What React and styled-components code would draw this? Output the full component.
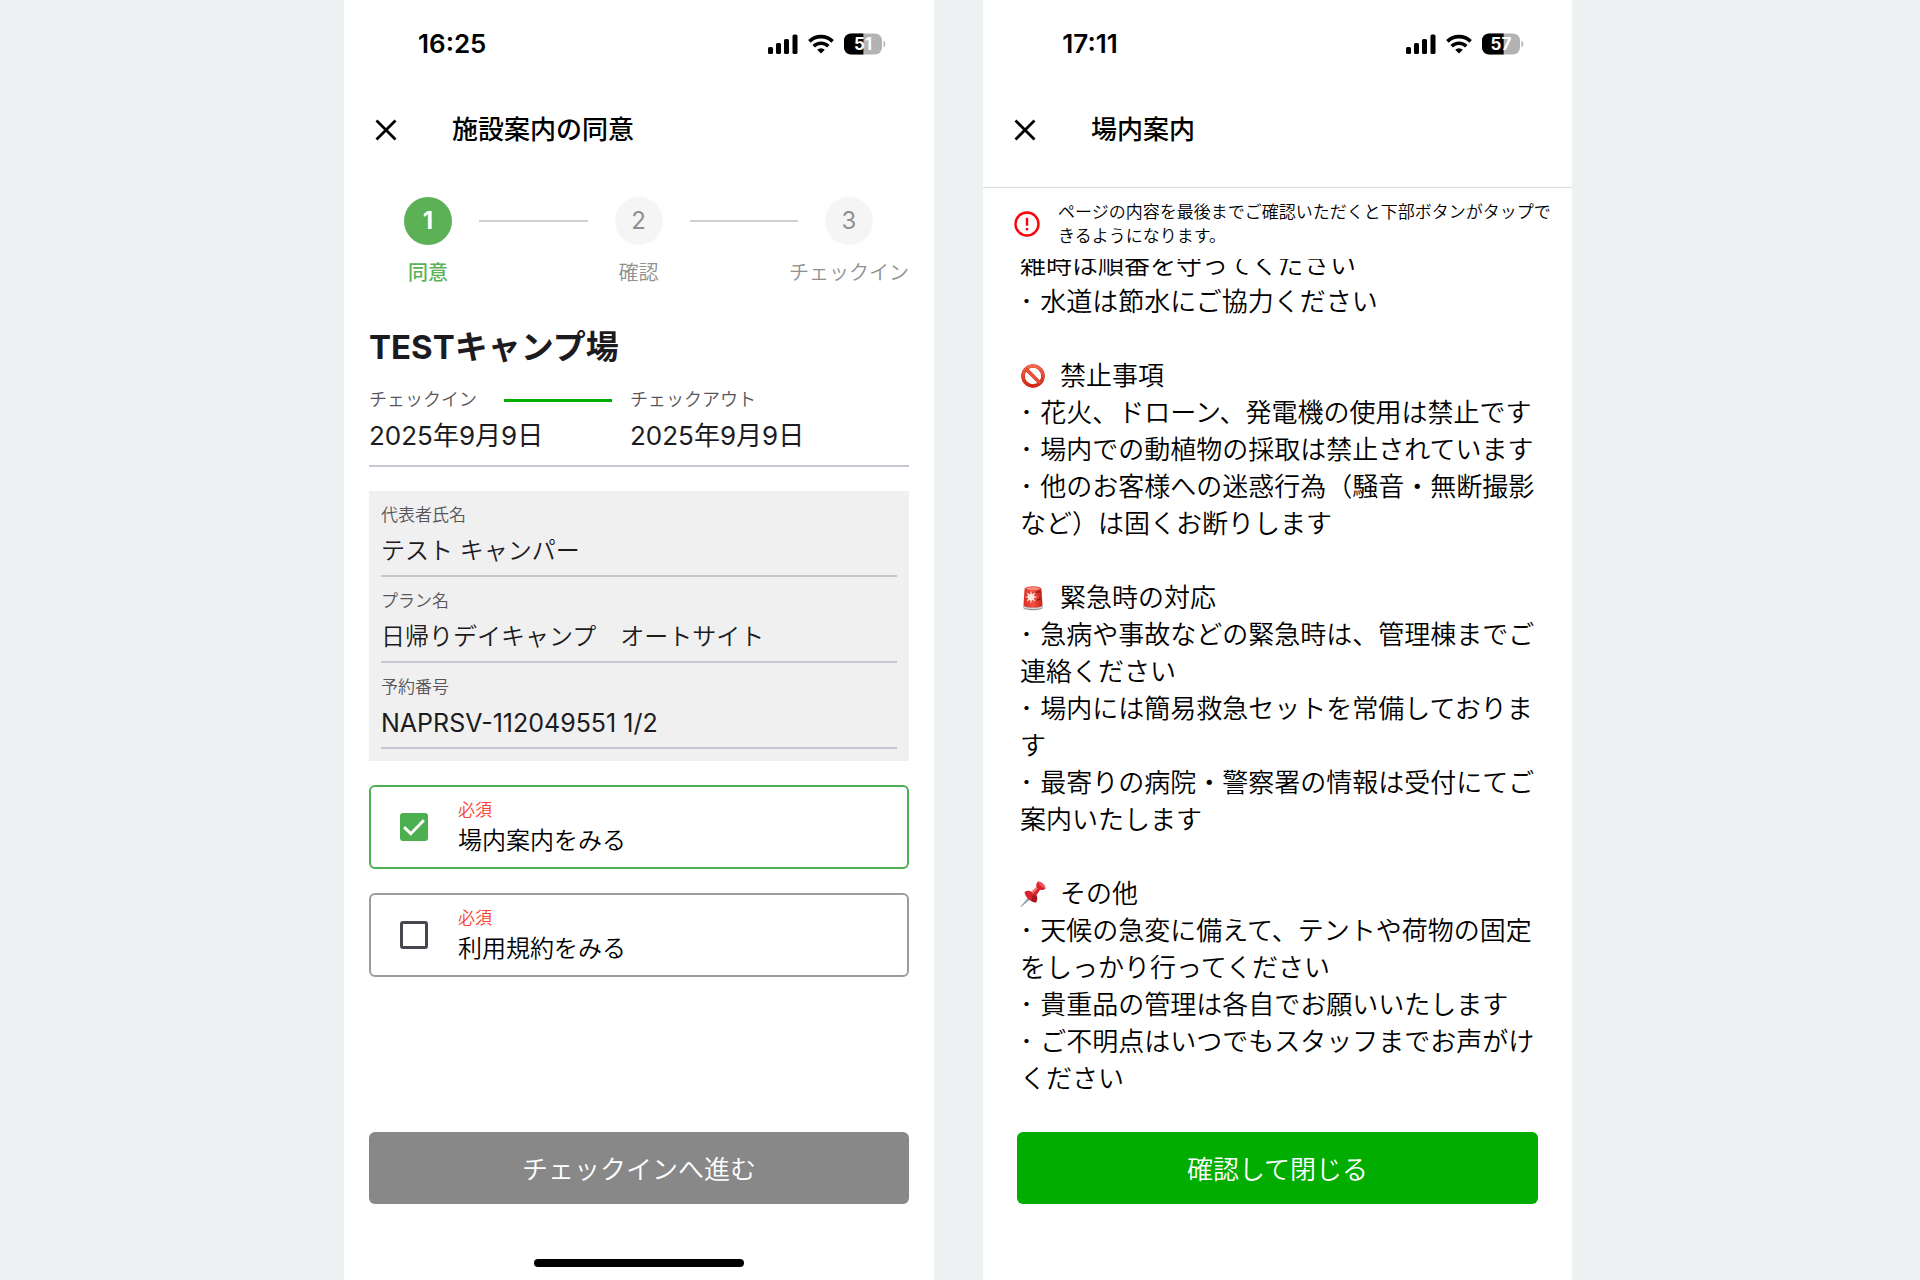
import React, { useState } from 'react';
import styled, { createGlobalStyle, ThemeProvider } from 'styled-components';

const theme = {
  page: '#edf1f2',
  ink: '#1c1b1f',
  subtle: '#57545b',
  green: '#4caf50',
  brand: '#00ad00',
  step: '#5cb157',
  rule: '#cac6d0',
  required: '#f44336',
};

const GlobalStyle = createGlobalStyle`
  *, *::before, *::after {
    box-sizing: border-box;
  }

  body {
    margin: 0;
    background: ${theme.page};
    color: ${theme.ink};
    font-family: Inter, 'Noto Sans CJK JP', sans-serif;
    font-weight: 350;
  }

  h1, h2, h3, p, ol, ul, dl, dd {
    margin: 0;
    padding: 0;
    list-style: none;
    font-weight: inherit;
  }
`;

const Screens = styled.div`
  display: grid;
  grid-template-columns: 344fr 590fr 49fr 589fr 348fr;
  min-height: 100vh;
`;

const Phone = styled.section`
  display: flex;
  flex-direction: column;
  grid-column: ${props => props.$column};
  min-width: 0;
  height: 100vh;
  min-height: 1280px;
  background: #fff;
`;

const StatusBar = styled.div`
  display: flex;
  align-items: center;
  justify-content: space-between;
  height: 88px;
  padding: 0 48px 0 74px;
  color: #000;
`;

const Time = styled.time`
  min-width: 66px;
  font-size: 26px;
  font-weight: 600;
  line-height: 32px;
  text-align: center;
`;

const StatusIcons = styled.div`
  display: flex;
  align-items: center;
  gap: 10px;
`;

const AppBar = styled.header`
  display: flex;
  align-items: center;
  gap: 48px;
  height: ${props => (props.$divided ? 100 : 84)}px;
  padding: 0 24px ${props => (props.$divided ? 15 : 0)}px;
  border-bottom: ${props => (props.$divided ? '1px solid #dadada' : 'none')};
`;

const CloseButton = styled.button`
  display: flex;
  padding: 0;
  border: 0;
  background: none;
  color: #000;
  cursor: pointer;
`;

const ScreenTitle = styled.h1`
  color: #000;
  font-size: 26px;
  font-weight: 500;
  line-height: 40px;
`;

const Steps = styled.ol`
  display: flex;
  padding: 25px 61px 0 60px;
`;

const Step = styled.li`
  display: flex;
  flex-direction: column;
  align-items: center;
  gap: 14px;
  width: 48px;
  color: ${props => (props.$active ? props.theme.step : '#8f8f8f')};
  font-size: 20px;
  font-weight: ${props => (props.$active ? 500 : 350)};
  line-height: 28px;
  white-space: nowrap;
`;

const StepNumber = styled.span`
  display: flex;
  align-items: center;
  justify-content: center;
  width: 48px;
  height: 48px;
  border-radius: 50%;
  background: ${props => (props.$active ? props.theme.step : '#f5f5f5')};
  color: ${props => (props.$active ? '#fff' : '#8f8f8f')};
  font-size: 24px;
  font-weight: ${props => (props.$active ? 700 : 400)};
`;

const StepLine = styled.li`
  flex: 1;
  height: 2px;
  margin: 23px 27px 0;
  background: #d0d0d0;
`;

const Content = styled.main`
  display: flex;
  flex: 1;
  flex-direction: column;
  gap: 24px;
  padding: 36px 25px 24px;
`;

const Stay = styled.div`
  padding-bottom: 13px;
  border-bottom: 2px solid ${props => props.theme.rule};
`;

const CampName = styled.h2`
  margin-bottom: 17px;
  font-size: 33px;
  font-weight: 700;
  line-height: 48px;
`;

const Dates = styled.dl`
  display: grid;
  grid-template-columns: 29fr 31fr;
`;

const DateLabel = styled.dt`
  display: flex;
  align-items: center;
  margin-bottom: 8px;
  color: ${props => props.theme.subtle};
  font-size: 18px;
  line-height: 24px;

  &:first-child::after {
    content: '';
    flex: 1;
    height: 3px;
    margin: 0 18px 0 27px;
    background: ${props => props.theme.brand};
  }
`;

const DateValue = styled.dd`
  font-size: 26px;
  font-weight: 400;
  line-height: 32px;
`;

const Details = styled.dl`
  padding: 0 12px 12px;
  background: #f0f0f0;
`;

const Detail = styled.div`
  padding: 12px 0 8px;
  border-bottom: 2px solid ${props => props.theme.rule};
`;

const DetailLabel = styled.dt`
  margin-bottom: 8px;
  color: ${props => props.theme.subtle};
  font-size: 17px;
  line-height: 24px;
`;

const DetailValue = styled.dd`
  font-size: ${props => (props.$code ? 25 : 24)}px;
  font-weight: ${props => (props.$code ? 400 : 350)};
  line-height: 32px;
`;

const Agreement = styled.label`
  display: flex;
  align-items: center;
  gap: 30px;
  height: 84px;
  padding: 0 29px;
  border: 2px solid ${props => (props.$checked ? props.theme.green : '#9c9c9c')};
  border-radius: 6px;
  cursor: pointer;
`;

const CheckboxCell = styled.span`
  display: grid;

  > * {
    grid-area: 1 / 1;
  }

  svg {
    pointer-events: none;
  }
`;

const Checkbox = styled.input`
  appearance: none;
  width: 28px;
  height: 28px;
  margin: 0;
  border: 3px solid #49454f;
  border-radius: 3px;

  &:checked {
    border-color: ${props => props.theme.green};
    background: ${props => props.theme.green};
  }
`;

const AgreementText = styled.span`
  display: flex;
  flex-direction: column;
  gap: 3px;
  color: #000;
  font-size: 24px;
  line-height: 32px;
`;

const Required = styled.span`
  color: ${props => props.theme.required};
  font-size: 17px;
  line-height: 24px;
`;

const Footer = styled.footer`
  display: flex;
  flex-direction: column;
  align-items: center;
  gap: 55px;
  height: 148px;
  padding: 0 ${props => props.$inset}px;
`;

const ActionButton = styled.button`
  width: 100%;
  height: 72px;
  padding: 0 0 2px;
  border: 0;
  border-radius: 6px;
  background: ${props => props.theme.brand};
  color: #fff;
  font: inherit;
  font-size: 26px;
  cursor: pointer;

  &:disabled {
    background: #888;
    cursor: default;
  }
`;

const HomeIndicator = styled.div`
  width: 210px;
  height: 8px;
  border-radius: 4px;
  background: #000;
`;

const Notice = styled.div`
  display: flex;
  align-items: center;
  gap: 18px;
  padding: 12px 14px 11px 31px;
  color: #000;
  font-size: 17px;
  line-height: 24px;

  svg {
    flex: none;
  }
`;

const Guide = styled.main`
  display: flex;
  flex: 1;
  flex-direction: column;
  justify-content: flex-end;
  gap: 37px;
  min-height: 0;
  overflow: hidden;
  margin-bottom: 35px;
  padding: 0 30px 0 37px;
  color: #000;
  font-size: 26px;
  line-height: 37px;
`;

const GuideTitle = styled.h3`
  display: flex;
  align-items: center;
  gap: 14px;
  font-size: 26px;
`;

const BatteryLevel = styled.text`
  font-size: 17px;
  font-weight: 700;
`;

const StatusGlyphs = ({ battery }) =>
  (<StatusIcons>
    <svg width="30" height="20" viewBox="0 0 30 20" aria-hidden="true">
      <rect x="0" y="13" width="5" height="7" rx="1.5" />
      <rect x="8" y="9" width="5" height="11" rx="1.5" />
      <rect x="16" y="5" width="5" height="15" rx="1.5" />
      <rect x="24.5" y="0.5" width="5" height="19.5" rx="1.5" />
    </svg>
    <svg width="26" height="20" viewBox="0 0 26 20" fill="none" stroke="#000" strokeWidth="3.6" aria-hidden="true">
      <path d="M1.4 7.4a16.6 16.6 0 0 1 23.2 0" />
      <path d="M5.7 12.2a10.4 10.4 0 0 1 14.6 0" />
      <path d="M13 19.6l-3.8-3.8a5.4 5.4 0 0 1 7.6 0z" fill="#000" stroke="none" />
    </svg>
    <svg width="42" height="22" viewBox="0 0 42 22" role="img" aria-label={`${battery}%`}>
      <clipPath id={`level-${battery}`}>
        <rect width={38 * battery / 100} height="22" />
      </clipPath>
      <rect y="0.5" width="38" height="21" rx="7" fill="#b3b3b3" />
      <rect y="0.5" width="38" height="21" rx="7" clipPath={`url(#level-${battery})`} />
      <path d="M39.5 7.6a4 4 0 0 1 0 6.8z" fill="#b3b3b3" />
      <BatteryLevel x="19" y="17" fill="#fff" textAnchor="middle">{battery}</BatteryLevel>
    </svg>
  </StatusIcons>);

const CloseIcon = () =>
  (<svg width="36" height="36" viewBox="0 0 36 36" fill="none" stroke="currentColor" strokeWidth="2.8" aria-hidden="true">
    <path d="M8.5 8.5l19 19M27.5 8.5l-19 19" />
  </svg>);

const CheckIcon = () =>
  (<svg width="28" height="28" viewBox="0 0 27 27" fill="none" stroke="#fff" strokeWidth="2.8" aria-hidden="true">
    <path d="M4 13.6l6.4 6.4L23 7" />
  </svg>);

const AlertIcon = () =>
  (<svg width="26" height="26" viewBox="0 0 26 26" fill="none" stroke="#fb0007" strokeWidth="2.4" aria-hidden="true">
    <circle cx="13" cy="13" r="11.5" />
    <path d="M13 6.8v8M13 16.9v2.5" />
  </svg>);

const ProhibitedIcon = () =>
  (<svg width="26" height="26" viewBox="0 0 26 26" fill="none" aria-hidden="true">
    <defs>
      <linearGradient id="prohibited" x1="0" y1="0" x2="0" y2="1">
        <stop offset="0" stopColor="#f4694d" />
        <stop offset="1" stopColor="#d02812" />
      </linearGradient>
    </defs>
    <circle cx="13" cy="13" r="10" stroke="#c5321e" strokeWidth="3.6" />
    <circle cx="13" cy="13" r="10" stroke="url(#prohibited)" strokeWidth="2.8" />
    <path d="M6 6l14 14" stroke="#c5321e" strokeWidth="3.4" />
    <path d="M6 6l14 14" stroke="#ea5138" strokeWidth="2.6" />
  </svg>);

const SirenIcon = () =>
  (<svg width="26" height="26" viewBox="0 0 26 26" aria-hidden="true">
    <defs>
      <linearGradient id="siren" x1="0" y1="0" x2="1" y2="0">
        <stop offset="0" stopColor="#d92f22" />
        <stop offset="0.5" stopColor="#f4503f" />
        <stop offset="1" stopColor="#c8231a" />
      </linearGradient>
    </defs>
    <path d="M3.2 20.5h19.6v2c0 3.6-19.6 3.6-19.6 0z" fill="#8d9296" />
    <path d="M3.2 20c0 3.4 19.6 3.4 19.6 0v1.8c0 3.2-19.6 3.2-19.6 0z" fill="#d5d8da" />
    <path d="M4.5 4.5C4.7 0.2 21.3 0.2 21.5 4.5l1 15.5c0 3.4-19 3.4-19 0z" fill="url(#siren)" />
    <ellipse cx="13" cy="3.6" rx="7" ry="1.6" fill="#f98b7b" />
    <path d="M16 8c2-2 4-1.6 4.500 0M17 15c2 0 3-1 3.500-2" fill="none" stroke="#8f1611" strokeWidth="1.3" />
    <path d="M11 5.5l1 4 3.500-1.900-1.900 3.500 4 1-4 1 1.900 3.500-3.500-1.900-1 4-1-4-3.500 1.900 1.900-3.500-3.400-1 3.400-1-1.900-3.500 3.500 1.900z" fill="#ffe9e4" />
  </svg>);

const PinIcon = () =>
  (<svg width="26" height="26" viewBox="0 0 26 26" aria-hidden="true">
    <path d="M9.2 15.2l2 2L1.2 26l-.6-.6z" fill="#8da0ae" />
    <path d="M4.5 11.2c2.2-1.8 5-1.7 7-.5l5-4.7c-.7-2 0-4 1.5-5.5 3.5.2 7 3.3 7.5 7-1.6 1.4-3.5 2-5.4 1.3l-3.7 5.5c1.2 2.4 1.2 5-.6 7.2C10.5 21 5.5 16.5 4.5 11.2z" fill="#d8232c" />
    <path d="M18 .5c3.5.2 7 3.3 7.5 7-3.2-.4-7-3.6-7.5-7z" fill="#f0555a" />
    <path d="M11.5 10.7l5-4.7 1.5 1.3-5 5.5z" fill="#f4777b" />
    <path d="M12.5 14.5l3.9-.2c1.2 2.4 1.2 5-.6 7.2-1.5-.1-2.9-.6-4.2-1.4z" fill="#a9151f" />
  </svg>);

const STEPS = ['同意', '確認', 'チェックイン'];

const DETAILS = [
  { label: '代表者氏名', value: 'テスト キャンパー' },
  { label: 'プラン名', value: '日帰りデイキャンプ　オートサイト' },
  { label: '予約番号', value: 'NAPRSV-112049551 1/2', code: true },
];

const AGREEMENTS = [
  { id: 'guide', label: '場内案内をみる' },
  { id: 'terms', label: '利用規約をみる' },
];

const GUIDE = [
  {
    title: '禁止事項',
    Icon: ProhibitedIcon,
    items: [
      '花火、ドローン、発電機の使用は禁止です',
      '場内での動植物の採取は禁止されています',
      '他のお客様への迷惑行為（騒音・無断撮影など）は固くお断りします',
    ],
  },
  {
    title: '緊急時の対応',
    Icon: SirenIcon,
    items: [
      '急病や事故などの緊急時は、管理棟までご連絡ください',
      '場内には簡易救急セットを常備しております',
      '最寄りの病院・警察署の情報は受付にてご案内いたします',
    ],
  },
  {
    title: 'その他',
    Icon: PinIcon,
    items: [
      '天候の急変に備えて、テントや荷物の固定をしっかり行ってください',
      '貴重品の管理は各自でお願いいたします',
      'ご不明点はいつでもスタッフまでお声がけください',
    ],
  },
];

const Header = ({ time, battery, title, divided }) =>
  (<>
    <StatusBar>
      <Time>{time}</Time>
      <StatusGlyphs battery={battery} />
    </StatusBar>
    <AppBar $divided={divided}>
      <CloseButton type="button" aria-label="閉じる">
        <CloseIcon />
      </CloseButton>
      <ScreenTitle>{title}</ScreenTitle>
    </AppBar>
  </>);

const ConsentScreen = () => {
  const [checked, setChecked] = useState({ guide: true, terms: false });
  const toggle = id => setChecked({ ...checked, [id]: !checked[id] });

  return (
    <Phone $column={2}>
      <Header time="16:25" battery={51} title="施設案内の同意" />
      <Steps>
        {STEPS.map((label, i) =>
          (<React.Fragment key={label}>
            {i > 0 && <StepLine aria-hidden="true" />}
            <Step $active={i === 0}>
              <StepNumber $active={i === 0}>{i + 1}</StepNumber>
              {label}
            </Step>
          </React.Fragment>),
        )}
      </Steps>
      <Content>
        <Stay>
          <CampName>TESTキャンプ場</CampName>
          <Dates>
            <DateLabel>チェックイン</DateLabel>
            <DateLabel>チェックアウト</DateLabel>
            <DateValue>2025年9月9日</DateValue>
            <DateValue>2025年9月9日</DateValue>
          </Dates>
        </Stay>
        <Details>
          {DETAILS.map(({ label, value, code }) =>
            (<Detail key={label}>
              <DetailLabel>{label}</DetailLabel>
              <DetailValue $code={code}>{value}</DetailValue>
            </Detail>),
          )}
        </Details>
        {AGREEMENTS.map(({ id, label }) =>
          (<Agreement key={id} htmlFor={id} $checked={checked[id]}>
            <CheckboxCell>
              <Checkbox id={id} type="checkbox" checked={checked[id]} onChange={() => toggle(id)} />
              {checked[id] && <CheckIcon />}
            </CheckboxCell>
            <AgreementText>
              <Required>必須</Required>
              {label}
            </AgreementText>
          </Agreement>),
        )}
      </Content>
      <Footer $inset={25}>
        <ActionButton type="button" disabled={!checked.guide || !checked.terms}>
          チェックインへ進む
        </ActionButton>
        <HomeIndicator />
      </Footer>
    </Phone>
  );
};

const GuideScreen = () =>
  (<Phone $column={4}>
    <Header time="17:11" battery={57} title="場内案内" divided />
    <Notice role="note">
      <AlertIcon />
      <p>ページの内容を最後までご確認いただくと下部ボタンがタップできるようになります。</p>
    </Notice>
    <Guide>
      <div>
        <p>雑時は順番を守ってください</p>
        <p>･ 水道は節水にご協力ください</p>
      </div>
      {GUIDE.map(({ title, Icon, items }) =>
        (<div key={title}>
          <GuideTitle>
            <Icon />
            {title}
          </GuideTitle>
          {items.map(item => <p key={item}>{`･ ${item}`}</p>)}
        </div>),
      )}
    </Guide>
    <Footer $inset={34}>
      <ActionButton type="button">確認して閉じる</ActionButton>
    </Footer>
  </Phone>);

export default () =>
  (<ThemeProvider theme={theme}>
    <GlobalStyle />
    <Screens lang="ja">
      <ConsentScreen />
      <GuideScreen />
    </Screens>
  </ThemeProvider>);
